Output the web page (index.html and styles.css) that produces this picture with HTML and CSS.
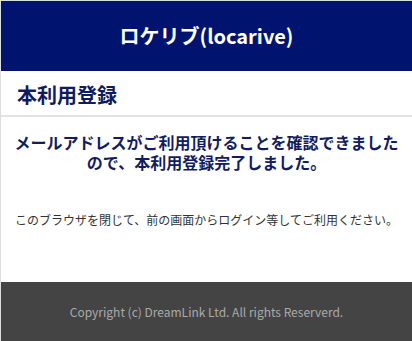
FILE: index.html
```html
<!DOCTYPE html>
<html lang="ja">

<head>
    <meta charset="UTF-8">
    <meta name="viewport" content="width=device-width, initial-scale=1.0">
    <title>本利用登録 | ロケリブ(locarive)</title>
    <link rel="stylesheet" href="styles.css">
</head>

<body>
    <div class="page">
        <header class="site-header">
            <h1>ロケリブ(locarive)</h1>
        </header>

        <div class="page-title">
            <h2>本利用登録</h2>
        </div>

        <main class="content">
            <p class="message">メールアドレスがご利用頂けることを確認できましたので、本利用登録完了しました。</p>
            <p class="note">このブラウザを閉じて、前の画面からログイン等してご利用ください。</p>
        </main>

        <footer class="site-footer">
            <p>Copyright (c) DreamLink Ltd. All rights Reserverd.</p>
        </footer>
    </div>
</body>

</html>
```

FILE: styles.css
```css
* {
    box-sizing: border-box;
}

body {
    margin: 0;
    font-family: "Noto Sans CJK JP", "Noto Sans", sans-serif;
    background-color: #fff;
}

.page {
    display: flex;
    flex-direction: column;
    height: 341px;
    border-top: 1px solid #dcdcdc;
    border-left: 1px solid #dcdcdc;
}

.site-header {
    display: flex;
    justify-content: center;
    align-items: center;
    height: 70px;
    background-color: #00146f;
}

.site-header h1 {
    margin: 0;
    font-size: 20px;
    font-weight: bold;
    line-height: 28px;
    color: #fff;
}

.page-title {
    padding: 10px 16px 6px;
    border-bottom: 2px solid #e2e2e2;
}

.page-title h2 {
    margin: 0;
    font-size: 20px;
    font-weight: bold;
    line-height: 28px;
    color: #101a5e;
}

.content {
    flex: 1;
    padding: 15px 12px 0;
    text-align: center;
}

.message {
    margin: 0;
    font-size: 16px;
    font-weight: bold;
    line-height: 20px;
    color: #131c60;
}

.note {
    margin: 39px 0 0;
    font-size: 12px;
    line-height: 18px;
    color: #333;
}

.site-footer {
    display: flex;
    justify-content: center;
    align-items: center;
    height: 59px;
    background-color: #444;
}

.site-footer p {
    margin: 0;
    font-size: 12px;
    color: #aaa;
}
```
